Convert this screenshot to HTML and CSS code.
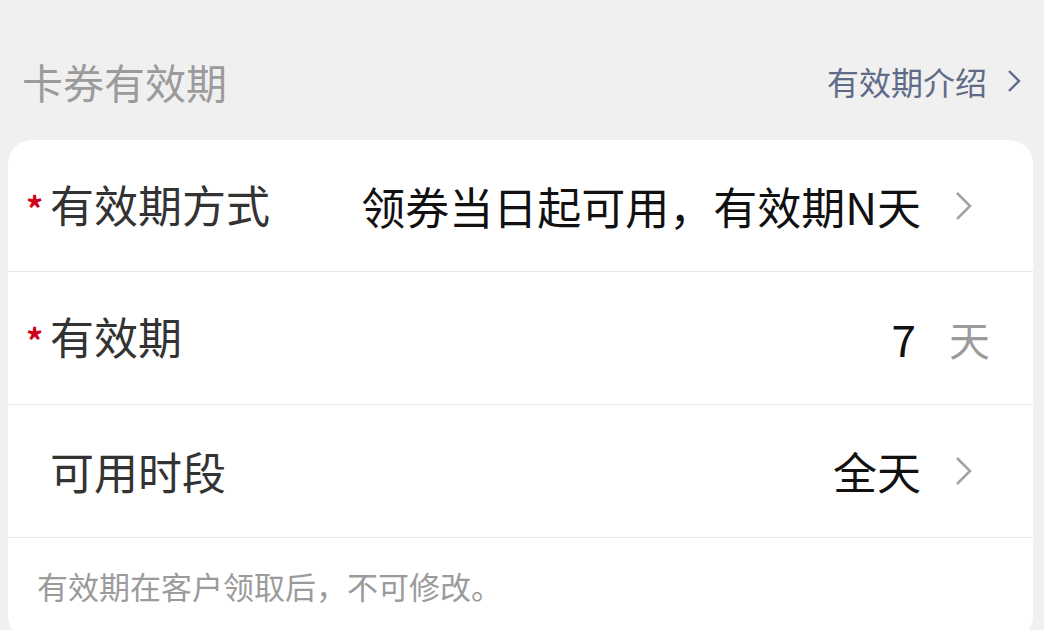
FILE: index.html
```html
<!DOCTYPE html>
<html>
<head>
<meta charset="UTF-8">
<link rel="stylesheet" href="styles.css">
</head>
<body>
<div class="page">
	<div class="head">
		<h2 class="head-title">卡券有效期</h2>
		<a class="head-link">有效期介绍
			<svg class="head-arrow" viewBox="0 0 14 24" width="14" height="24"><path d="M2 2 L12 12 L2 22" fill="none" stroke="#5f6b88" stroke-width="2.4"/></svg>
		</a>
	</div>

	<div class="card">
		<div class="row">
			<div class="label"><span class="star">*</span>有效期方式</div>
			<div class="value">领券当日起可用，有效期N天</div>
			<svg class="arrow" viewBox="0 0 18 30" width="18" height="30"><path d="M2 2 L15 15 L2 28" fill="none" stroke="#a3a3a3" stroke-width="2.6"/></svg>
		</div>
		<div class="row">
			<div class="label"><span class="star">*</span>有效期</div>
			<div class="value">7</div>
			<span class="unit">天</span>
		</div>
		<div class="row">
			<div class="label">可用时段</div>
			<div class="value">全天</div>
			<svg class="arrow" viewBox="0 0 18 30" width="18" height="30"><path d="M2 2 L15 15 L2 28" fill="none" stroke="#a3a3a3" stroke-width="2.6"/></svg>
		</div>
		<div class="tip">有效期在客户领取后，不可修改。</div>
	</div>
</div>
</body>
</html>
```

FILE: styles.css
```css
html,body{
	margin:0;
	padding:0;
	background:#F0F0F0;
	font-family:"Noto Sans CJK SC","Noto Sans",sans-serif;
}
h2,div,p{
	margin:0;
	padding:0;
}
.page{
	padding:0 11px 0 8px;
}
.head{
	display:flex;
	justify-content:space-between;
	align-items:flex-start;
	height:80px;
	padding:60px 0 0 14px;
}
.head-title{
	font-size:41px;
	font-weight:normal;
	line-height:42px;
	color:#9B9B9B;
}
.head-link{
	display:flex;
	align-items:center;
	font-size:32px;
	line-height:42px;
	color:#5F6B88;
	margin-right:12px;
}
.head-arrow{
	margin-left:20px;
}
.card{
	background:#FFF;
	border-radius:24px;
	overflow:hidden;
}
.row{
	display:flex;
	align-items:center;
	height:133px;
	padding:0 43px 0 42px;
	border-bottom:1px solid #E6E6E6;
	box-sizing:border-box;
}
.row:first-child{
	height:132px;
}
.label{
	flex:1;
	font-size:44px;
	color:#333;
	line-height:50px;
}
.star{
	display:inline-block;
	width:24px;
	margin-left:-24px;
	font-size:34px;
	font-weight:bold;
	color:#D0021B;
	vertical-align:top;
	line-height:50px;
	margin-top:4px;
}
.value{
	font-size:44px;
	color:#111;
	line-height:50px;
}
.arrow{
	margin:0 17px 0 34px;
}
.unit{
	margin-left:33px;
	font-size:41px;
	color:#9B9B9B;
}
.tip{
	height:102px;
	padding-left:29px;
	font-size:31px;
	line-height:96px;
	color:#9B9B9B;
}
```
